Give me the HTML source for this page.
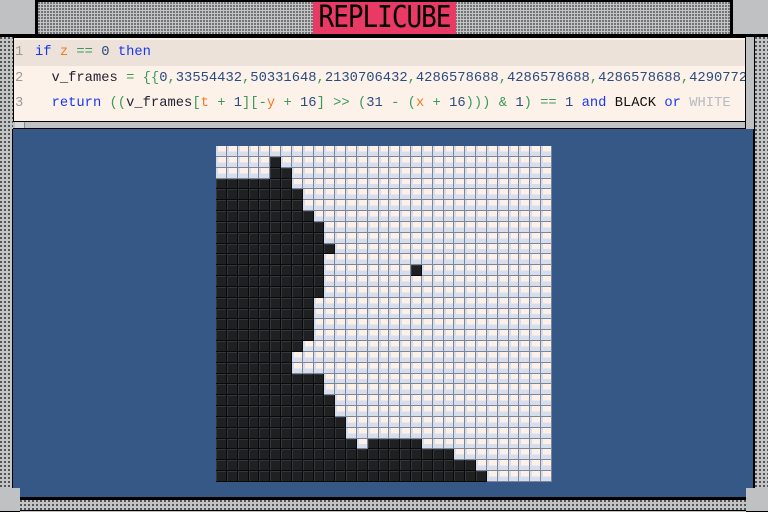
<!DOCTYPE html>
<html><head><meta charset="utf-8"><style>
*{margin:0;padding:0;box-sizing:border-box}
body{width:768px;height:512px;overflow:hidden;background:#c0c1c3;position:relative;font-family:"Liberation Mono",monospace}
.dots{background-color:#c3c4c6;background-image:radial-gradient(circle at 1px 1px,#5a5a5a 0.9px,transparent 1px);background-size:3px 3px}
.dots4{background:conic-gradient(from 0deg at 2px 2px,#c3c4c6 0 75%,#555 0) 0 0/4px 4px #c3c4c6}
.abs{position:absolute}
#top{left:0;top:0;width:768px;height:37px;background:#000}
#tb{left:38px;top:2px;width:692px;height:32px}
#bl{left:0;top:0;width:37px;height:36px;background:#c0c1c3;border:2px solid #000;border-top:none;border-left:none}
#br{left:731px;top:0;width:37px;height:36px;background:#c0c1c3;border:2px solid #000;border-top:none;border-right:none}
#title{left:313px;top:2px;width:143px;height:32px;background:#e83a64;color:#000;font:26px "DejaVu Sans Mono",monospace;line-height:32px;text-align:center;letter-spacing:-1px;transform-origin:center}
#title span{display:inline-block;transform:scaleY(1.15)}
#left{left:0;top:37px;width:13px;height:455px}
#right{left:755px;top:37px;width:13px;height:455px}
#code{left:13px;top:37px;width:732px;height:84px;background:#fdf2ea;border-left:1px solid #000;border-top:1px solid #000;overflow:hidden}
.ln{position:absolute;left:0;height:26px;width:732px;white-space:pre;font-size:13.8px;line-height:26px;color:#223}
.num{color:#999;display:inline-block;width:21px;padding-left:1px}
.k{color:#1838ee}.o{color:#3a9a5a}.n{color:#2b4b7d}.v{color:#f07a20}.w{color:#b5bac3}.b{color:#111}
#hs{left:13px;top:121px;width:732px;height:8px;background:#c0c1c3;border-top:1px solid #000;border-bottom:1px solid #000}
#hs div{position:absolute;left:2px;top:0;width:10px;height:6px;background:#d8d8d8;border-right:1px solid #888}
#vs{left:745px;top:37px;width:10px;height:92px;background:#c0c1c3;border-left:1px solid #000;border-right:1px solid #000}
#blue{left:12px;top:129px;width:743px;height:370px;background:#355887;border:1px solid #000;border-top:none;border-width:0 2px 2px 1px}
#bot{left:20px;top:499px;width:726px;height:12px}
#cbl{left:0;top:488px;width:20px;height:24px;background:#c0c1c3;border-bottom:1px solid #000}
#cbr{left:746px;top:488px;width:22px;height:24px;background:#c0c1c3;border-bottom:1px solid #000}
#grid{left:216px;top:146px;width:336px;height:336px;display:grid;grid-template-columns:repeat(31,1fr);grid-template-rows:repeat(31,1fr);background:#7e8698}
.c{background:linear-gradient(180deg,#fdf0e7 0 55%,#d6deee 55%);border-right:1px solid #7d8598;border-bottom:1px solid #7d8598;box-shadow:inset 2px 0 0 #d6deee}
.d{background:#1e2022;border-right:1px solid #080909;border-bottom:1px solid #080909;box-shadow:inset 1px 1px 0 #34373b}
</style></head><body>
<div id="top" class="abs"></div>
<div id="tb" class="abs dots"></div>
<div id="bl" class="abs"></div>
<div id="br" class="abs"></div>
<div id="title" class="abs"><span>REPLICUBE</span></div>
<div id="left" class="abs dots4"></div>
<div id="right" class="abs dots4"></div>
<div id="code" class="abs">
<div class="ln" style="top:2px;background:#ede2d9"><span class="num">1</span><span class="k">if</span> <span class="v">z</span> <span class="o">==</span> <span class="n">0</span> <span class="k">then</span></div>
<div class="ln" style="top:28px"><span class="num">2</span>  v_frames <span class="o">=</span> <span class="o">{{</span><span class="n">0</span><span class="o">,</span><span class="n">33554432</span><span class="o">,</span><span class="n">50331648</span><span class="o">,</span><span class="n">2130706432</span><span class="o">,</span><span class="n">4286578688</span><span class="o">,</span><span class="n">4286578688</span><span class="o">,</span><span class="n">4286578688</span><span class="o">,</span><span class="n">4290772992</span></div>
<div class="ln" style="top:53px"><span class="num">3</span>  <span class="k">return</span> <span class="o">((</span>v_frames<span class="o">[</span><span class="v">t</span> <span class="o">+</span> <span class="n">1</span><span class="o">][-</span><span class="v">y</span> <span class="o">+</span> <span class="n">16</span><span class="o">]</span> <span class="o">&gt;&gt;</span> <span class="o">(</span><span class="n">31</span> <span class="o">-</span> <span class="o">(</span><span class="v">x</span> <span class="o">+</span> <span class="n">16</span><span class="o">)))</span> <span class="o">&amp;</span> <span class="n">1</span><span class="o">)</span> <span class="o">==</span> <span class="n">1</span> <span class="k">and</span> <span class="b">BLACK</span> <span class="k">or</span> <span class="w">WHITE</span></div>
</div>
<div id="hs" class="abs"><div></div></div>
<div id="vs" class="abs"></div>
<div id="blue" class="abs"></div>
<div id="cbl" class="abs"></div>
<div id="cbr" class="abs"></div>
<div id="bot" class="abs dots4" style="border-top:1px solid #000;border-bottom:1px solid #000"></div>
<div id="grid" class="abs"></div>
<script>
var ends=[-1,-2,-3,6,7,7,8,9,9,10,9,9,9,9,8,8,8,8,7,6,6,9,9,10,10,11,11,12,21,23,24];
var g=document.getElementById('grid'),h='';
for(var r=0;r<31;r++)for(var c=0;c<31;c++){
 var b=c<=ends[r];
 if(r==1&&c==5)b=true;
 if(r==2&&(c==5||c==6))b=true;
 if(r==11&&c==18)b=true;
 if(r==27&&c==13)b=false;
 if(r==27&&c>=14&&c<=18)b=true;
 h+='<div class="'+(b?'d':'c')+'"></div>';
}
g.innerHTML=h;
</script>
</body></html>
